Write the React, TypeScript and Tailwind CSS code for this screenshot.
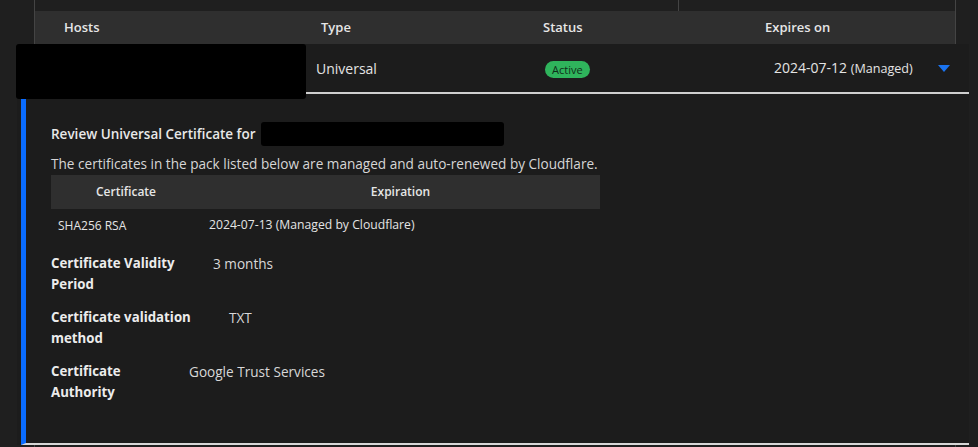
import React from 'react';

function Caret() {
    return (
        <svg width="12" height="7" viewBox="0 0 12 7" className="block">
            <path d="M0 0 H12 L6 7 Z" fill="#1a73f0" />
        </svg>
    );
}

const details = [
    { label: ['Certificate Validity', 'Period'], value: '3 months', w: 'w-[162px]' },
    { label: ['Certificate validation', 'method'], value: 'TXT', w: 'w-[178px]' },
    { label: ['Certificate', 'Authority'], value: 'Google Trust Services', w: 'w-[138px]' },
];

export default function App() {
    return (
        <div
            className="relative h-[447px] w-full overflow-hidden bg-[#1f1f1f] text-[#e4e4e4]"
            style={{ fontFamily: '"Open Sans", "Noto Sans", sans-serif' }}
        >
            {/* table header block */}
            <div className="ml-[34px] w-[922px] border-x border-[#444]">
                <div className="flex h-[11px]">
                    <div className="w-[644px] border-r border-[#444]" />
                </div>
                <div className="flex h-[33px] items-center bg-[#2f2f2f] text-[13px] font-semibold text-[#e6e6e6]">
                    <div className="w-[286px] pl-[29px]">Hosts</div>
                    <div className="w-[222px]">Type</div>
                    <div className="w-[222px]">Status</div>
                    <div>Expires on</div>
                </div>
            </div>

            {/* selected row */}
            <div className="ml-[17px] w-[952px] bg-[#1c1c1c]">
                <div className="flex h-[50px] items-center border-b-2 border-[#cfcfcf] text-[14px] text-[#e4e4e4]">
                    <div className="w-[299px]" />
                    <div className="w-[229px]">Universal</div>
                    <div className="w-[229px]">
                        <span className="inline-flex h-[17px] items-center rounded-full bg-[#2fb45c] px-[7px] text-[11px] text-[#0f2e1a]">
                            Active
                        </span>
                    </div>
                    <div className="w-[164px]">
                        2024-07-12 <span className="text-[12.6px]">(Managed)</span>
                    </div>
                    <Caret />
                </div>

                {/* expanded details */}
                <div className="ml-[4px] h-[351px] border-b-2 border-l-[5px] border-b-[#d6d6d6] border-l-[#0a6cff] pl-[25px] pt-[27px]">
                    <div className="flex h-[26px] items-center text-[13.5px] font-semibold text-[#e8e8e8]">
                        Review Universal Certificate for
                        <span className="ml-[5px] inline-block h-[24px] w-[243px] rounded-[3px] bg-black" />
                    </div>
                    <p className="mt-[7px] whitespace-nowrap text-[13.6px] leading-[20px] text-[#d6d6d6]">
                        The certificates in the pack listed below are managed and auto-renewed by Cloudflare.
                    </p>
                    <div className="mt-[1px] w-[549px] text-[12px]">
                        <div className="flex h-[34px] items-center bg-[#2f2f2f] font-semibold text-[#e6e6e6]">
                            <div className="w-[150px] text-center">Certificate</div>
                            <div className="flex-1 text-center">Expiration</div>
                        </div>
                        <div className="flex h-[33px] items-center text-[#e4e4e4]">
                            <div className="w-[150px] pl-[7px]">SHA256 RSA</div>
                            <div className="flex-1 pl-[8px] text-[12.2px]">2024-07-13 (Managed by Cloudflare)</div>
                        </div>
                    </div>
                    <div className="mt-[11px] flex flex-col gap-[12px]">
                        {details.map((d) => (
                            <div key={d.value} className="flex leading-[21px]">
                                <div className={`${d.w} text-[13.25px] font-bold text-[#ececec]`}>
                                    {d.label[0]}
                                    <br />
                                    {d.label[1]}
                                </div>
                                <div className="text-[13.6px] text-[#d8d8d8]">{d.value}</div>
                            </div>
                        ))}
                    </div>
                </div>
            </div>

            {/* lower table edge */}
            <div className="ml-[34px] h-[4px] w-[922px] border-x border-[#444]" />

            {/* redaction over host name */}
            <div className="absolute left-[16px] top-[44px] h-[55px] w-[290px] rounded-[3px] bg-black" />
        </div>
    );
}
